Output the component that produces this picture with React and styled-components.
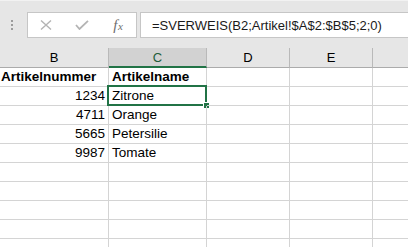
import React from "react";
import styled, { createGlobalStyle } from "styled-components";

const GlobalStyle = createGlobalStyle`
  html, body {
    margin: 0;
    padding: 0;
    background: #ffffff;
    overflow: hidden;
  }
  body {
    font-family: "Liberation Sans", Arial, sans-serif;
  }
`;

const columns = [
  { key: "B", width: 109 },
  { key: "C", width: 98 },
  { key: "D", width: 83 },
  { key: "E", width: 83 },
  { key: "F", width: 40 },
];

const rows = [
  { num: "Artikelnummer", name: "Artikelname", head: true },
  { num: "1234", name: "Zitrone", selected: true },
  { num: "4711", name: "Orange" },
  { num: "5665", name: "Petersilie" },
  { num: "9987", name: "Tomate" },
  {},
  {},
  {},
  {},
  {},
];

function Sheet() {
  return (
    <Page>
      <FormulaBar>
        <Grip>
          <Dot />
          <Dot />
          <Dot />
        </Grip>
        <ButtonBox>
          <BarButton>
            <svg width="12" height="10" viewBox="0 0 12 10">
              <path d="M1 0.5 L11 9.5 M11 0.5 L1 9.5" stroke="#b4b4b4" strokeWidth="1.4" fill="none" />
            </svg>
          </BarButton>
          <BarButton>
            <svg width="14" height="10" viewBox="0 0 14 10">
              <path d="M1 5 L4.5 9 L13 0.8" stroke="#b4b4b4" strokeWidth="1.8" fill="none" />
            </svg>
          </BarButton>
          <BarButton>
            <Fx>
              f<small>x</small>
            </Fx>
          </BarButton>
        </ButtonBox>
        <FormulaBox>=SVERWEIS(B2;Artikel!$A$2:$B$5;2;0)</FormulaBox>
      </FormulaBar>

      <Grid>
        {columns.map((c) => (
          <ColHeader key={c.key} active={c.key === "C"}>
            {c.key === "F" ? "" : c.key}
          </ColHeader>
        ))}
        {rows.map((r, i) => (
          <React.Fragment key={i}>
            <Cell align={r.head ? "left" : "right"} bold={r.head} tight>
              {r.num}
            </Cell>
            <Cell bold={r.head}>
              {r.name}
              {r.selected && (
                <Selection>
                  <Handle />
                </Selection>
              )}
            </Cell>
            <Cell />
            <Cell />
            <Cell />
          </React.Fragment>
        ))}
      </Grid>
    </Page>
  );
}

export default function App() {
  return (
    <>
      <GlobalStyle />
      <Sheet />
    </>
  );
}

const Page = styled.div`
  width: 408px;
  height: 247px;
  overflow: hidden;
  background: #ffffff;
`;

const FormulaBar = styled.div`
  height: 48px;
  box-sizing: border-box;
  background: #e6e6e6;
  border-top: 1px solid #f2f2f2;
  padding: 11px 0 0 0;
  display: flex;
  align-items: flex-start;
`;

const Grip = styled.div`
  width: 27px;
  display: flex;
  flex-direction: column;
  align-items: center;
  gap: 2px;
  padding-top: 8px;
  box-sizing: border-box;
  margin-left: -2px;
  margin-right: 2px;
`;

const Dot = styled.span`
  width: 2px;
  height: 2px;
  background: #9c9c9c;
`;

const ButtonBox = styled.div`
  width: 110px;
  height: 26px;
  box-sizing: border-box;
  border: 1px solid #c6c6c6;
  background: #ffffff;
  display: flex;
`;

const BarButton = styled.div`
  width: 36px;
  display: flex;
  align-items: center;
  justify-content: center;
`;

const Fx = styled.span`
  font-family: "Liberation Serif", "Times New Roman", serif;
  font-style: italic;
  font-size: 15px;
  color: #6e6e6e;
  line-height: 1;
  margin-top: 1px;

  small {
    font-size: 11px;
    margin-left: 0.5px;
  }
`;

const FormulaBox = styled.div`
  margin-left: 3px;
  flex: 1;
  height: 26px;
  box-sizing: border-box;
  border: 1px solid #c6c6c6;
  border-right: none;
  background: #ffffff;
  padding: 2px 0 0 11px;
  font-size: 13px;
  line-height: 22px;
  color: #1a1a1a;
  white-space: nowrap;
  overflow: hidden;
`;

const Grid = styled.div`
  display: grid;
  grid-template-columns: ${columns.map((c) => c.width + "px").join(" ")};
  grid-auto-rows: 19px;
  grid-template-rows: 20px;
`;

const ColHeader = styled.div`
  box-sizing: border-box;
  background: ${(p) => (p.active ? "#d2d2d2" : "#e6e6e6")};
  border-right: 1px solid #b9b9b9;
  border-bottom: ${(p) => (p.active ? "2px solid #217346" : "1px solid #ababab")};
  color: ${(p) => (p.active ? "#1e5c3a" : "#000000")};
  font-size: 13px;
  line-height: 19px;
  text-align: center;
`;

const Cell = styled.div`
  position: relative;
  box-sizing: border-box;
  border-right: 1px solid #d4d4d4;
  border-bottom: 1px solid #d4d4d4;
  font-size: 13.5px;
  font-weight: ${(p) => (p.bold ? 700 : 400)};
  line-height: 18px;
  color: #000000;
  text-align: ${(p) => p.align || "left"};
  padding: ${(p) => (p.tight ? "0 3px 0 1px" : "0 2px 0 3px")};
  white-space: nowrap;
`;

const Selection = styled.div`
  position: absolute;
  left: -2px;
  top: -2px;
  width: 100px;
  height: 21px;
  box-sizing: border-box;
  border: 2px solid #217346;
`;

const Handle = styled.div`
  position: absolute;
  right: -4px;
  bottom: -4px;
  width: 5px;
  height: 5px;
  background: #217346;
  box-shadow: 0 0 0 1px #ffffff;
`;
